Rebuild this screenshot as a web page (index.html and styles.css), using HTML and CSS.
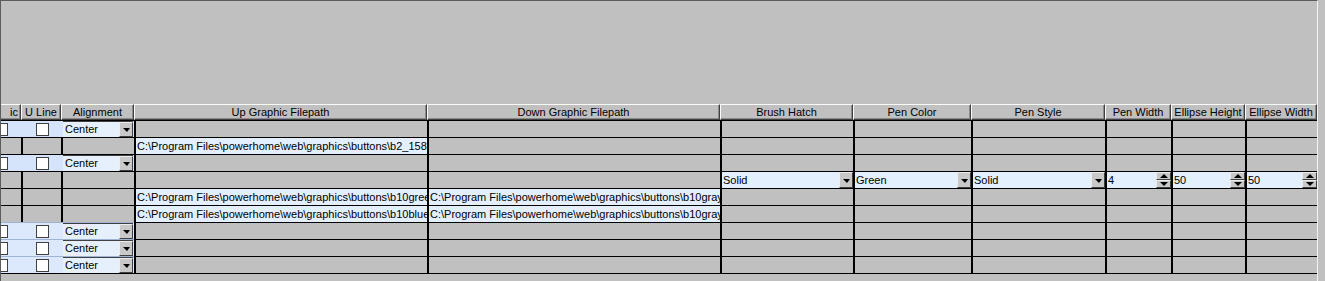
FILE: index.html
```html
<!DOCTYPE html>
<html lang="en">
  <head>
    <meta charset="UTF-8" />
    <meta name="viewport" content="width=device-width, initial-scale=1.0" />
    <title>Button Graphics</title>
    <link rel="stylesheet" href="styles.css">
  </head>
  <body>
    <div class="window">
      <div class="blank"></div>

      <div class="grid">
        <div class="row head">
          <div class="cell right">ic</div>
          <div class="cell">U Line</div>
          <div class="cell">Alignment</div>
          <div class="cell">Up Graphic Filepath</div>
          <div class="cell">Down Graphic Filepath</div>
          <div class="cell">Brush Hatch</div>
          <div class="cell">Pen Color</div>
          <div class="cell">Pen Style</div>
          <div class="cell">Pen Width</div>
          <div class="cell">Ellipse Height</div>
          <div class="cell">Ellipse Width</div>
        </div>

        <!-- row 1 -->
        <div class="row">
          <div class="cell blue"><span class="check cut"></span></div>
          <div class="cell blue mid"><span class="check"></span></div>
          <div class="cell blue"><div class="combo edge"><span>Center</span><i class="drop"></i></div></div>
          <div class="cell"></div><div class="cell"></div><div class="cell"></div><div class="cell"></div>
          <div class="cell"></div><div class="cell"></div><div class="cell"></div><div class="cell"></div>
        </div>

        <!-- row 2 -->
        <div class="row">
          <div class="cell"></div><div class="cell"></div><div class="cell"></div>
          <div class="cell field"><span>C:\Program Files\powerhome\web\graphics\buttons\b2_158.gif</span></div>
          <div class="cell"></div><div class="cell"></div><div class="cell"></div>
          <div class="cell"></div><div class="cell"></div><div class="cell"></div><div class="cell"></div>
        </div>

        <!-- row 3 -->
        <div class="row">
          <div class="cell blue"><span class="check cut"></span></div>
          <div class="cell blue mid"><span class="check"></span></div>
          <div class="cell blue"><div class="combo edge"><span>Center</span><i class="drop"></i></div></div>
          <div class="cell"></div><div class="cell"></div><div class="cell"></div><div class="cell"></div>
          <div class="cell"></div><div class="cell"></div><div class="cell"></div><div class="cell"></div>
        </div>

        <!-- row 4 -->
        <div class="row">
          <div class="cell"></div><div class="cell"></div><div class="cell"></div>
          <div class="cell"></div><div class="cell"></div>
          <div class="cell"><div class="combo"><span>Solid</span><i class="drop"></i></div></div>
          <div class="cell"><div class="combo"><span>Green</span><i class="drop"></i></div></div>
          <div class="cell"><div class="combo"><span>Solid</span><i class="drop"></i></div></div>
          <div class="cell"><div class="combo"><span>4</span><i class="spin"><b class="up"></b><b class="down"></b></i></div></div>
          <div class="cell"><div class="combo"><span>50</span><i class="spin"><b class="up"></b><b class="down"></b></i></div></div>
          <div class="cell"><div class="combo"><span>50</span><i class="spin"><b class="up"></b><b class="down"></b></i></div></div>
        </div>

        <!-- row 5 -->
        <div class="row">
          <div class="cell"></div><div class="cell"></div><div class="cell"></div>
          <div class="cell field"><span>C:\Program Files\powerhome\web\graphics\buttons\b10green_up.gif</span></div>
          <div class="cell field"><span>C:\Program Files\powerhome\web\graphics\buttons\b10gray_dn.gif</span></div>
          <div class="cell"></div><div class="cell"></div><div class="cell"></div>
          <div class="cell"></div><div class="cell"></div><div class="cell"></div>
        </div>

        <!-- row 6 -->
        <div class="row">
          <div class="cell"></div><div class="cell"></div><div class="cell"></div>
          <div class="cell field"><span>C:\Program Files\powerhome\web\graphics\buttons\b10blue_up.gif</span></div>
          <div class="cell field"><span>C:\Program Files\powerhome\web\graphics\buttons\b10gray_dn.gif</span></div>
          <div class="cell"></div><div class="cell"></div><div class="cell"></div>
          <div class="cell"></div><div class="cell"></div><div class="cell"></div>
        </div>

        <!-- rows 7 to 9 -->
        <div class="row soft">
          <div class="cell blue"><span class="check cut"></span></div>
          <div class="cell blue mid"><span class="check"></span></div>
          <div class="cell blue"><div class="combo edge"><span>Center</span><i class="drop"></i></div></div>
          <div class="cell"></div><div class="cell"></div><div class="cell"></div><div class="cell"></div>
          <div class="cell"></div><div class="cell"></div><div class="cell"></div><div class="cell"></div>
        </div>
        <div class="row soft">
          <div class="cell blue"><span class="check cut"></span></div>
          <div class="cell blue mid"><span class="check"></span></div>
          <div class="cell blue"><div class="combo edge"><span>Center</span><i class="drop"></i></div></div>
          <div class="cell"></div><div class="cell"></div><div class="cell"></div><div class="cell"></div>
          <div class="cell"></div><div class="cell"></div><div class="cell"></div><div class="cell"></div>
        </div>
        <div class="row soft last">
          <div class="cell blue"><span class="check cut"></span></div>
          <div class="cell blue mid"><span class="check"></span></div>
          <div class="cell blue"><div class="combo edge"><span>Center</span><i class="drop"></i></div></div>
          <div class="cell"></div><div class="cell"></div><div class="cell"></div><div class="cell"></div>
          <div class="cell"></div><div class="cell"></div><div class="cell"></div><div class="cell"></div>
        </div>
      </div>
    </div>
  </body>
</html>
```

FILE: styles.css
```css
body {
  margin: 0;
  background-color: #c0c0c0;
  font-family: "Liberation Sans", Arial, sans-serif;
  font-size: 11px;
  color: #000;
  overflow: hidden;
}

.window {
  width: 1318px;
  height: 281px;
  box-sizing: border-box;
  border-top: 1px solid #5c5c5c;
  border-left: 1px solid #5c5c5c;
  border-right: 1px solid #f4f4f4;
}

.blank {
  height: 103px;
}

.row {
  display: grid;
  grid-template-columns: 20px 40px 73px 293px 293px 133px 118px 134px 66px 74px 72px;
  height: 17px;
  box-sizing: border-box;
  border-top: 1px solid #000;
}

.row.last {
  height: 18px;
  border-bottom: 1px solid #000;
}

.cell {
  display: flex;
  align-items: center;
  min-width: 0;
  overflow: hidden;
  box-sizing: border-box;
  border-left: 2px solid #000;
  white-space: nowrap;
}

.cell:first-child {
  border-left: 0;
}

/* header */
.row.head {
  height: 16px;
  border-top: 0;
}

.head .cell {
  justify-content: center;
  border: 1px solid;
  border-color: #fafafa #404040 #404040 #fafafa;
  box-shadow: inset -1px -1px #8a8a8a;
  padding-bottom: 1px;
}

.head .cell.right {
  justify-content: flex-end;
  padding-right: 2px;
  border-left: 0;
}

/* edit cells */
.cell.blue {
  background-color: #d5e4fa;
  border-left-color: #d5e4fa;
}

.row.soft .cell.blue {
  background-color: #dce9fc;
  border-left-color: #dce9fc;
}

.row.soft {
  border-top-color: #9fb4d4;
}

.row.soft .cell:nth-child(n+4) {
  border-top: 1px solid #000;
  margin-top: -1px;
}

.cell.mid {
  justify-content: center;
}

.cell.field span {
  display: block;
  width: 100%;
  height: 100%;
  line-height: 16px;
  padding-left: 1px;
  background-color: #e3effd;
}

.check {
  width: 13px;
  height: 13px;
  flex: none;
  box-sizing: border-box;
  background-color: #fff;
  border: 1px solid #404040;
}

.check.cut {
  margin-left: -6px;
}

.combo {
  display: flex;
  width: 100%;
  height: 100%;
  background-color: #e3effd;
}

.combo.edge {
  border-left: 1px solid #404040;
  border-top: 1px solid #404040;
  margin-left: -1px;
  box-sizing: border-box;
  background-color: #e6f0fd;
}

.combo span {
  flex: 1;
  min-width: 0;
  overflow: hidden;
  line-height: 16px;
  padding-left: 1px;
}

.combo.edge span {
  line-height: 15px;
  padding-left: 2px;
}

.drop {
  width: 14px;
  flex: none;
  display: flex;
  align-items: center;
  justify-content: center;
  box-sizing: border-box;
  background-color: #c8c8c8;
  border: 1px solid;
  border-color: #ececec #404040 #404040 #ececec;
}

.drop::after {
  content: "";
  border-left: 4px solid transparent;
  border-right: 3px solid transparent;
  border-top: 4px solid #000;
  margin-top: 1px;
}

.spin {
  width: 15px;
  flex: none;
  display: flex;
  flex-direction: column;
}

.spin b {
  flex: 1;
  display: flex;
  align-items: center;
  justify-content: center;
  box-sizing: border-box;
  background-color: #c8c8c8;
  border: 1px solid;
  border-color: #ececec #404040 #404040 #ececec;
}

.spin .up::after {
  content: "";
  border-left: 4px solid transparent;
  border-right: 4px solid transparent;
  border-bottom: 4px solid #000;
}

.spin .down::after {
  content: "";
  border-left: 4px solid transparent;
  border-right: 4px solid transparent;
  border-top: 4px solid #000;
}
```
